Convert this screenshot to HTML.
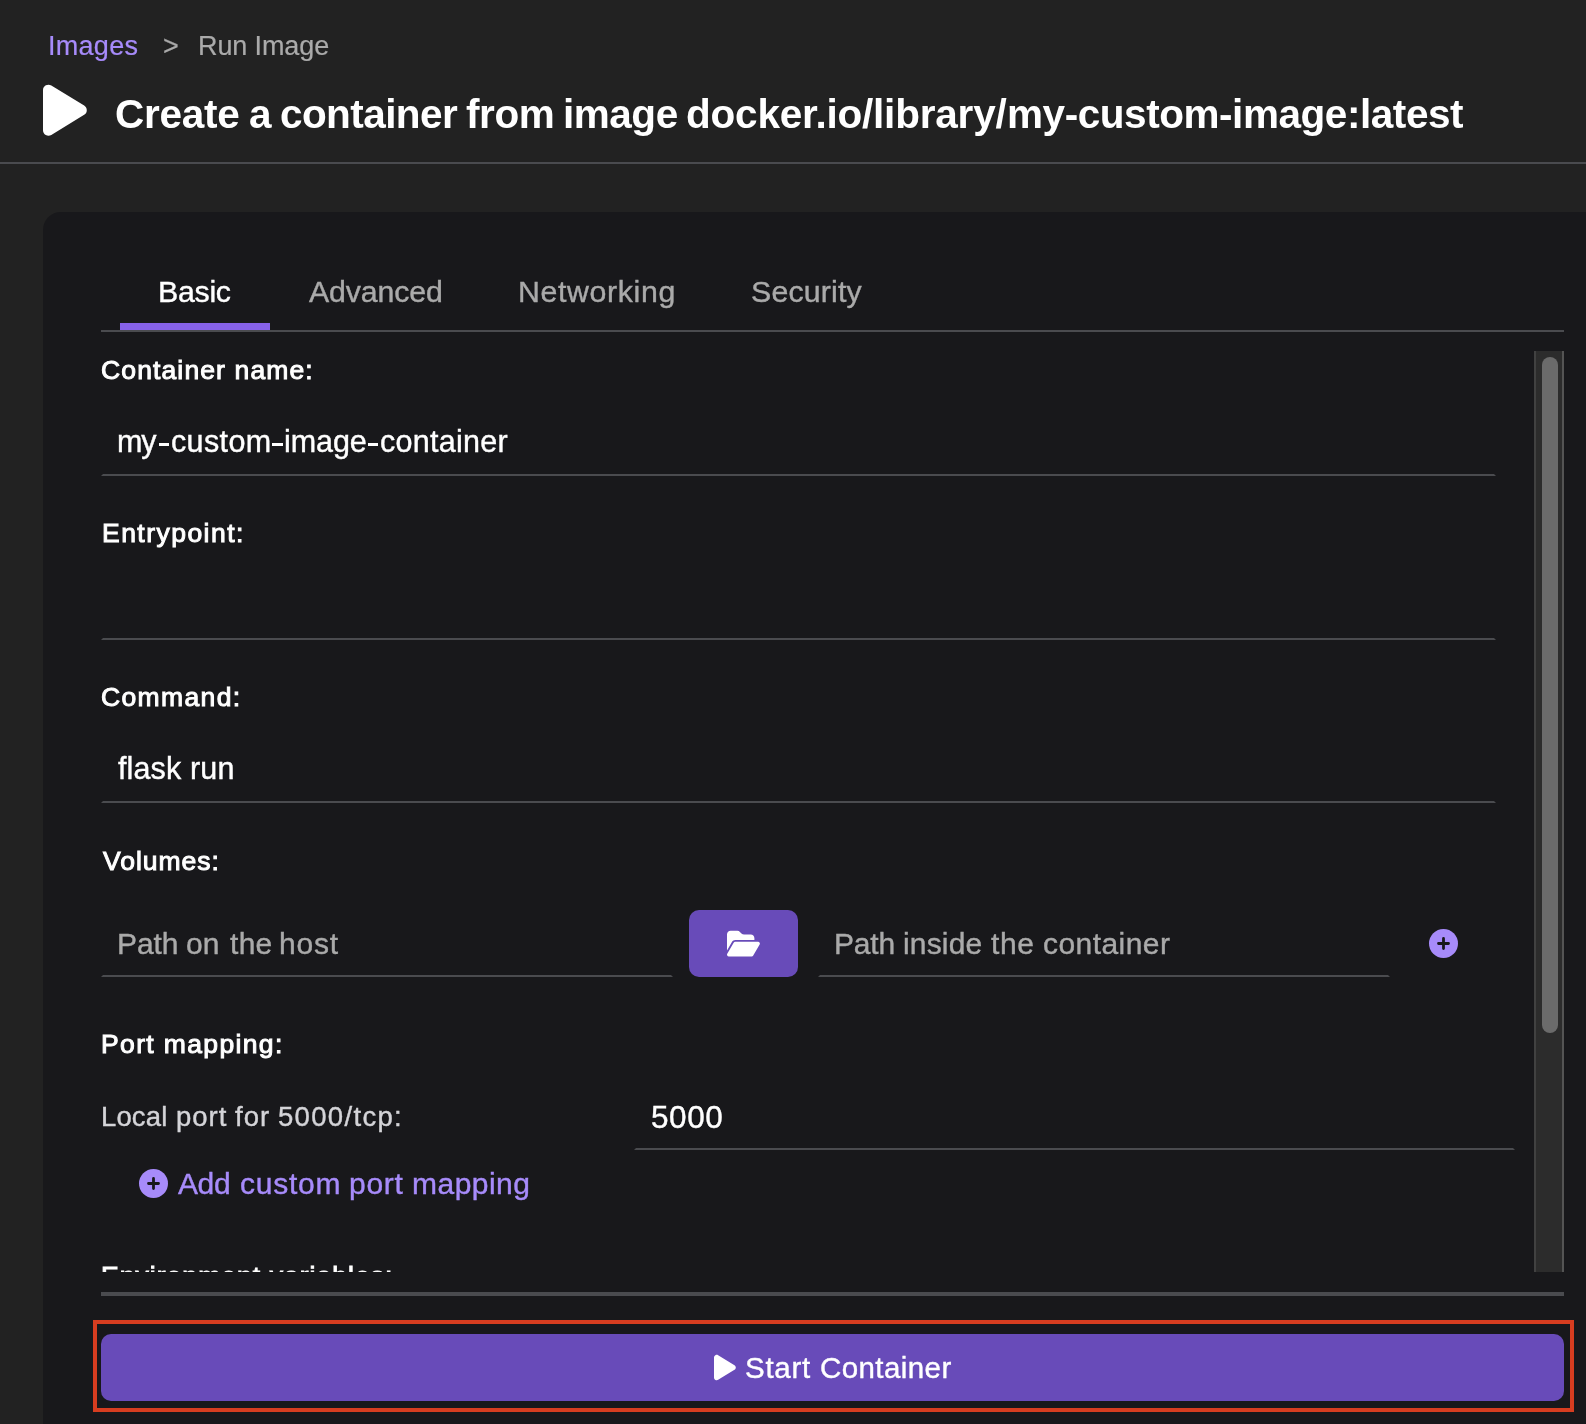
<!DOCTYPE html>
<html><head><meta charset="utf-8"><title>Run Image</title>
<style>
html,body{margin:0;padding:0;}
body{width:1586px;height:1424px;overflow:hidden;background:#222222;position:relative;font-family:"Liberation Sans",sans-serif;}
body div, body svg{position:absolute;}
.t{white-space:nowrap;will-change:transform;}
</style></head><body>
<div class="t" style="left:47.6px;top:33.04px;font-size:27px;line-height:27px;font-weight:400;letter-spacing:0.28px;color:#a78bfa;-webkit-text-stroke:0.2px #a78bfa">Images</div>
<div class="t" style="left:162.8px;top:33.04px;font-size:27px;line-height:27px;font-weight:400;letter-spacing:0px;color:#aaaaaa;-webkit-text-stroke:0.2px #aaaaaa">&gt;</div>
<div class="t" style="left:197.5px;top:33.04px;font-size:27px;line-height:27px;font-weight:400;letter-spacing:-0.112px;color:#aaaaaa;-webkit-text-stroke:0.2px #aaaaaa">Run Image</div>
<svg style="left:42.9px;top:81.05px" width="43.80" height="58.40" viewBox="0 0 384 512"><path fill="#ffffff" d="M73 39c-14.8-9.1-33.4-9.4-48.5-.9S0 62.6 0 80V432c0 17.4 9.4 33.4 24.5 41.9s33.7 8.1 48.5-.9L361 297c14.3-8.7 23-24.2 23-41s-8.7-32.2-23-41L73 39z"/></svg>
<div class="t" style="left:115.0px;top:93.72px;font-size:40.5px;line-height:40.5px;font-weight:700;letter-spacing:-0.26px;color:#ffffff;-webkit-text-stroke:0px #ffffff">Create</div>
<div class="t" style="left:248.6px;top:93.72px;font-size:40.5px;line-height:40.5px;font-weight:700;letter-spacing:0px;color:#ffffff;-webkit-text-stroke:0px #ffffff">a</div>
<div class="t" style="left:279.6px;top:93.72px;font-size:40.5px;line-height:40.5px;font-weight:700;letter-spacing:-0.575px;color:#ffffff;-webkit-text-stroke:0px #ffffff">container</div>
<div class="t" style="left:466.2px;top:93.72px;font-size:40.5px;line-height:40.5px;font-weight:700;letter-spacing:-0.4px;color:#ffffff;-webkit-text-stroke:0px #ffffff">from</div>
<div class="t" style="left:562.5px;top:93.72px;font-size:40.5px;line-height:40.5px;font-weight:700;letter-spacing:-0.475px;color:#ffffff;-webkit-text-stroke:0px #ffffff">image</div>
<div class="t" style="left:686.4px;top:93.72px;font-size:40.5px;line-height:40.5px;font-weight:700;letter-spacing:-0.2px;color:#ffffff;-webkit-text-stroke:0px #ffffff">docker.io/library/</div>
<div class="t" style="left:1007.3px;top:93.72px;font-size:40.5px;line-height:40.5px;font-weight:700;letter-spacing:-0.443px;color:#ffffff;-webkit-text-stroke:0px #ffffff">my-custom-image:latest</div>
<div style="left:0px;top:162px;width:1586px;height:2px;background:#4a4b4f;"></div>
<div style="left:43px;top:212px;width:1557px;height:1228px;background:#18181b;border-top-left-radius:18px;"></div>
<div class="t" style="left:157.6px;top:277.05px;font-size:30.3px;line-height:30.3px;font-weight:400;letter-spacing:-0.275px;color:#ffffff;-webkit-text-stroke:0.4px #ffffff">Basic</div>
<div class="t" style="left:308.9px;top:277.15px;font-size:30.3px;line-height:30.3px;font-weight:400;letter-spacing:-0.143px;color:#aaaaaa;-webkit-text-stroke:0.4px #aaaaaa">Advanced</div>
<div class="t" style="left:518.2px;top:277.15px;font-size:30.3px;line-height:30.3px;font-weight:400;letter-spacing:0.644px;color:#aaaaaa;-webkit-text-stroke:0.4px #aaaaaa">Networking</div>
<div class="t" style="left:751.2px;top:277.15px;font-size:30.3px;line-height:30.3px;font-weight:400;letter-spacing:0.171px;color:#aaaaaa;-webkit-text-stroke:0.4px #aaaaaa">Security</div>
<div style="left:101px;top:330px;width:1463px;height:2px;background:#4a4b4f;"></div>
<div style="left:120px;top:323px;width:150px;height:7px;background:#8661e8;"></div>
<div style="left:0;top:332px;width:1534px;height:940px;overflow:hidden">
<div style="left:0;top:-332px;width:1586px;height:1424px">
<div class="t" style="left:100.8px;top:357.17px;font-size:26.5px;line-height:26.5px;font-weight:400;letter-spacing:1.129px;color:#ffffff;-webkit-text-stroke:1.0px #ffffff">Container name:</div>
<div class="t" style="left:116.6px;top:426.08px;font-size:30.5px;line-height:30.5px;font-weight:400;letter-spacing:-1.1px;color:#ffffff;-webkit-text-stroke:0.4px #ffffff">my</div>
<div class="t" style="left:170.7px;top:426.08px;font-size:30.5px;line-height:30.5px;font-weight:400;letter-spacing:0.36px;color:#ffffff;-webkit-text-stroke:0.4px #ffffff">custom</div>
<div class="t" style="left:283.5px;top:426.08px;font-size:30.5px;line-height:30.5px;font-weight:400;letter-spacing:-0.075px;color:#ffffff;-webkit-text-stroke:0.4px #ffffff">image</div>
<div class="t" style="left:380.1px;top:426.08px;font-size:30.5px;line-height:30.5px;font-weight:400;letter-spacing:0.287px;color:#ffffff;-webkit-text-stroke:0.4px #ffffff">container</div>
<div style="left:158.9px;top:443.3px;width:10.099999999999994px;height:2.6999999999999886px;background:#ffffff;"></div>
<div style="left:272.4px;top:443.3px;width:10.200000000000045px;height:2.6999999999999886px;background:#ffffff;"></div>
<div style="left:368.1px;top:443.3px;width:10.199999999999989px;height:2.6999999999999886px;background:#ffffff;"></div>
<div style="left:101px;top:472px;width:1391px;height:0;border:2px solid transparent;border-bottom-color:#4a4b4f"></div>
<div class="t" style="left:101.6px;top:519.57px;font-size:26.5px;line-height:26.5px;font-weight:400;letter-spacing:1.47px;color:#ffffff;-webkit-text-stroke:1.0px #ffffff">Entrypoint:</div>
<div style="left:101px;top:636px;width:1391px;height:0;border:2px solid transparent;border-bottom-color:#4a4b4f"></div>
<div class="t" style="left:100.6px;top:684.37px;font-size:26.5px;line-height:26.5px;font-weight:400;letter-spacing:1.371px;color:#ffffff;-webkit-text-stroke:1.0px #ffffff">Command:</div>
<div class="t" style="left:118.0px;top:753.38px;font-size:30.5px;line-height:30.5px;font-weight:400;letter-spacing:0.137px;color:#ffffff;-webkit-text-stroke:0.4px #ffffff">flask run</div>
<div style="left:101px;top:799px;width:1391px;height:0;border:2px solid transparent;border-bottom-color:#4a4b4f"></div>
<div class="t" style="left:102.6px;top:847.77px;font-size:26.5px;line-height:26.5px;font-weight:400;letter-spacing:0.971px;color:#ffffff;-webkit-text-stroke:1.0px #ffffff">Volumes:</div>
<div class="t" style="left:116.8px;top:928.71px;font-size:30px;line-height:30px;font-weight:400;letter-spacing:-0.067px;color:#aaaaaa;-webkit-text-stroke:0.4px #aaaaaa">Path</div>
<div class="t" style="left:186.2px;top:928.71px;font-size:30px;line-height:30px;font-weight:400;letter-spacing:0.0px;color:#aaaaaa;-webkit-text-stroke:0.4px #aaaaaa">on</div>
<div class="t" style="left:229.6px;top:928.71px;font-size:30px;line-height:30px;font-weight:400;letter-spacing:0.3px;color:#aaaaaa;-webkit-text-stroke:0.4px #aaaaaa">the</div>
<div class="t" style="left:279.0px;top:928.71px;font-size:30px;line-height:30px;font-weight:400;letter-spacing:0.833px;color:#aaaaaa;-webkit-text-stroke:0.4px #aaaaaa">host</div>
<div style="left:101px;top:973px;width:568px;height:0;border:2px solid transparent;border-bottom-color:#4a4b4f"></div>
<div style="left:689px;top:910px;width:109px;height:67px;background:#684bb9;border-radius:10px;"></div>
<svg style="left:726.7px;top:928.7px" width="32.90" height="29.24" viewBox="0 0 576 512"><path fill="#ffffff" d="M88.7 223.8L0 375.8V96C0 60.7 28.7 32 64 32H181.5c17 0 33.3 6.7 45.3 18.7l26.5 26.5c12 12 28.3 18.7 45.3 18.7H416c35.3 0 64 28.7 64 64v32H144c-22.8 0-43.8 12.1-55.3 31.8zm27.6 16.1C122.1 230 132.6 224 144 224H544c11.5 0 22 6.1 27.7 16.1s5.7 22.2-.1 32.1l-112 192C453.9 474 443.4 480 432 480H32c-11.5 0-22-6.1-27.7-16.1s-5.7-22.2 .1-32.1l112-192z"/></svg>
<div class="t" style="left:833.7px;top:928.71px;font-size:30px;line-height:30px;font-weight:400;letter-spacing:-0.2px;color:#aaaaaa;-webkit-text-stroke:0.4px #aaaaaa">Path</div>
<div class="t" style="left:903.2px;top:928.71px;font-size:30px;line-height:30px;font-weight:400;letter-spacing:0.16px;color:#aaaaaa;-webkit-text-stroke:0.4px #aaaaaa">inside</div>
<div class="t" style="left:991.2px;top:928.71px;font-size:30px;line-height:30px;font-weight:400;letter-spacing:0.65px;color:#aaaaaa;-webkit-text-stroke:0.4px #aaaaaa">the</div>
<div class="t" style="left:1042.7px;top:928.71px;font-size:30px;line-height:30px;font-weight:400;letter-spacing:0.438px;color:#aaaaaa;-webkit-text-stroke:0.4px #aaaaaa">container</div>
<div style="left:818px;top:973px;width:567.5px;height:0;border:2px solid transparent;border-bottom-color:#4a4b4f"></div>
<svg style="left:1429.0px;top:929.0px" width="29" height="29" viewBox="0 0 29 29"><circle cx="14.5" cy="14.5" r="14.5" fill="#a78bfa"/><path d="M9.5 14.5H19.5M14.5 9.5V19.5" stroke="#18181b" stroke-width="2.8" stroke-linecap="round"/></svg>
<div class="t" style="left:101.1px;top:1031.47px;font-size:26.5px;line-height:26.5px;font-weight:400;letter-spacing:1.358px;color:#ffffff;-webkit-text-stroke:1.0px #ffffff">Port mapping:</div>
<div class="t" style="left:100.6px;top:1102.82px;font-size:27.5px;line-height:27.5px;font-weight:400;letter-spacing:0.125px;color:#d4d4d8;-webkit-text-stroke:0.4px #d4d4d8">Local</div>
<div class="t" style="left:175.7px;top:1102.82px;font-size:27.5px;line-height:27.5px;font-weight:400;letter-spacing:1.0px;color:#d4d4d8;-webkit-text-stroke:0.4px #d4d4d8">port</div>
<div class="t" style="left:235.2px;top:1102.82px;font-size:27.5px;line-height:27.5px;font-weight:400;letter-spacing:1.0px;color:#d4d4d8;-webkit-text-stroke:0.4px #d4d4d8">for</div>
<div class="t" style="left:278.1px;top:1102.82px;font-size:27.5px;line-height:27.5px;font-weight:400;letter-spacing:1.325px;color:#d4d4d8;-webkit-text-stroke:0.4px #d4d4d8">5000/tcp:</div>
<div class="t" style="left:650.8px;top:1102.44px;font-size:31.5px;line-height:31.5px;font-weight:400;letter-spacing:0.6px;color:#ffffff;-webkit-text-stroke:0.4px #ffffff">5000</div>
<div style="left:634px;top:1146px;width:877px;height:0;border:2px solid transparent;border-bottom-color:#4a4b4f"></div>
<svg style="left:138.8px;top:1168.8px" width="29" height="29" viewBox="0 0 29 29"><circle cx="14.5" cy="14.5" r="14.5" fill="#a78bfa"/><path d="M9.5 14.5H19.5M14.5 9.5V19.5" stroke="#18181b" stroke-width="2.8" stroke-linecap="round"/></svg>
<div class="t" style="left:178.2px;top:1169.4px;font-size:30px;line-height:30px;font-weight:400;letter-spacing:-0.4px;color:#a78bfa;-webkit-text-stroke:0.4px #a78bfa">Add</div>
<div class="t" style="left:239.8px;top:1169.4px;font-size:30px;line-height:30px;font-weight:400;letter-spacing:0.74px;color:#a78bfa;-webkit-text-stroke:0.4px #a78bfa">custom</div>
<div class="t" style="left:348.8px;top:1169.4px;font-size:30px;line-height:30px;font-weight:400;letter-spacing:0.733px;color:#a78bfa;-webkit-text-stroke:0.4px #a78bfa">port</div>
<div class="t" style="left:411.5px;top:1169.4px;font-size:30px;line-height:30px;font-weight:400;letter-spacing:0.483px;color:#a78bfa;-webkit-text-stroke:0.4px #a78bfa">mapping</div>
<div class="t" style="left:100.8px;top:1262.67px;font-size:26.5px;line-height:26.5px;font-weight:400;letter-spacing:1.043px;color:#ffffff;-webkit-text-stroke:1.0px #ffffff">Environment variables:</div>
</div>
</div>
<div style="left:1534px;top:351px;width:30px;height:921px;background:#2c2c2c;"></div>
<div style="left:1534px;top:351px;width:2px;height:921px;background:#414141;"></div>
<div style="left:1562px;top:351px;width:2px;height:921px;background:#545454;"></div>
<div style="left:1542px;top:357px;width:16px;height:676px;background:#6b6b6b;border-radius:8px;"></div>
<div style="left:101px;top:1292px;width:1463px;height:4px;background:#4a4b4f;"></div>
<div style="left:93px;top:1320px;width:1473px;height:84px;border:4px solid #d73d20;"></div>
<div style="left:101px;top:1334px;width:1463px;height:67px;background:#684bb9;border-radius:10px;"></div>
<svg style="left:713.9px;top:1353.0px" width="21.80" height="29.07" viewBox="0 0 384 512"><path fill="#ffffff" d="M73 39c-14.8-9.1-33.4-9.4-48.5-.9S0 62.6 0 80V432c0 17.4 9.4 33.4 24.5 41.9s33.7 8.1 48.5-.9L361 297c14.3-8.7 23-24.2 23-41s-8.7-32.2-23-41L73 39z"/></svg>
<div class="t" style="left:744.9px;top:1353.03px;font-size:29.5px;line-height:29.5px;font-weight:400;letter-spacing:0.725px;color:#ffffff;-webkit-text-stroke:0.4px #ffffff">Start</div>
<div class="t" style="left:819.5px;top:1353.03px;font-size:29.5px;line-height:29.5px;font-weight:400;letter-spacing:0.412px;color:#ffffff;-webkit-text-stroke:0.4px #ffffff">Container</div>
</body></html>
